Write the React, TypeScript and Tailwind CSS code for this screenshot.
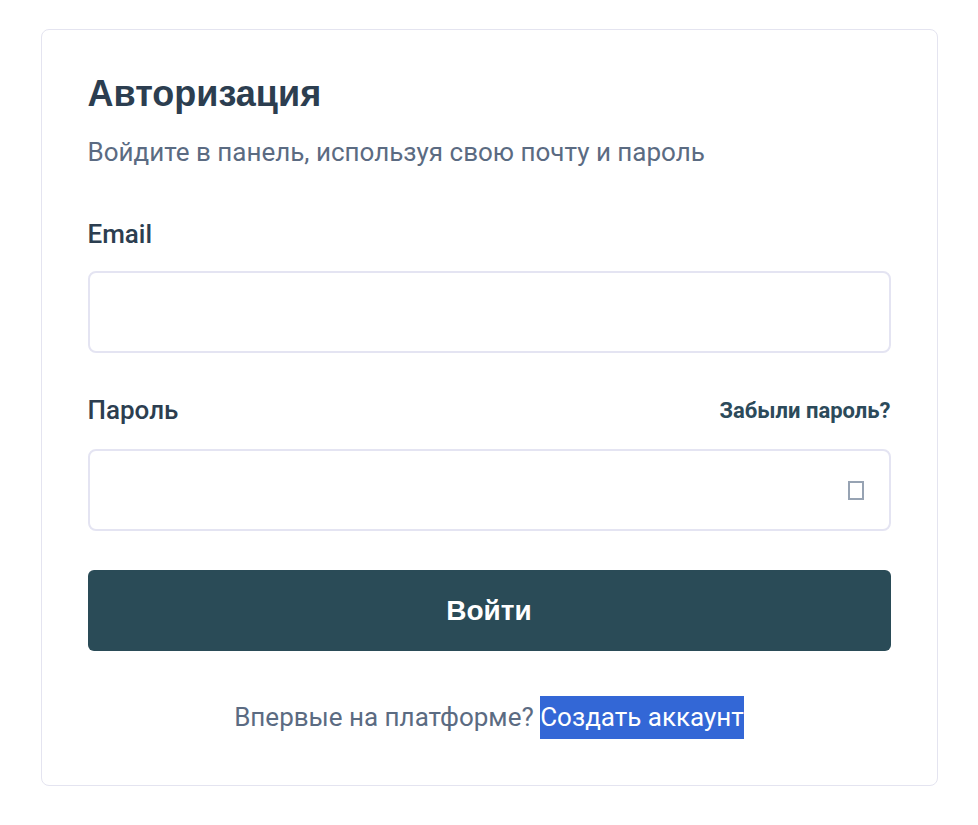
export default function App() {
  return (
    <div className="min-h-screen bg-white pt-[29px]" style={{ fontFamily: "Roboto, 'Liberation Sans', sans-serif" }}>
      <div className="mx-auto w-[897px] rounded-lg border border-[#e4e4f0] bg-white p-[46px]">
        <h1 className="font-['Liberation_Sans',Arial,sans-serif] text-[36px] font-bold leading-[36px] text-[#2c3e50]">
          Авторизация
        </h1>
        <p className="mt-[22px] text-[26px] leading-[36px] text-[#5b6b82]">
          Войдите в панель, используя свою почту и пароль
        </p>

        <label className="mt-[46px] block text-[26px] font-medium leading-[36px] text-[#2c3e50]">Email</label>
        <input
          type="email"
          className="mt-[19px] block h-[82px] w-full rounded-lg border-2 border-[#e4e4f2] bg-white px-5 text-[24px] outline-none"
        />

        <div className="mt-[39px] flex items-center justify-between">
          <label className="text-[26px] font-medium leading-[36px] text-[#2c3e50]">Пароль</label>
          <a className="text-[22px] font-bold text-[#2c4a5a]">Забыли пароль?</a>
        </div>
        <div className="relative mt-[21px]">
          <input
            type="password"
            className="block h-[82px] w-full rounded-lg border-2 border-[#e4e4f2] bg-white px-5 pr-16 text-[24px] outline-none"
          />
          <span className="absolute right-[27px] top-[32px] h-[19px] w-[16px] border-2 border-[#97a3b3]" />
        </div>

        <button className="mt-[39px] flex h-[81px] w-full items-center justify-center rounded-md bg-[#2a4b57] font-['Liberation_Sans',Arial,sans-serif] text-[28px] font-bold text-white">
          Войти
        </button>

        <p className="mt-[45px] text-center text-[26px] leading-[43px] text-[#5b6b82]">
          Впервые на платформе?{" "}
          <a className="inline-block bg-[#3367d6] text-white">Создать аккаунт</a>
        </p>
      </div>
    </div>
  );
}
